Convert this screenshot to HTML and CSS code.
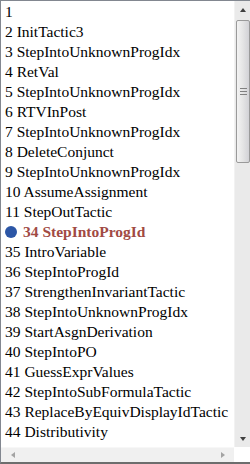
FILE: index.html
```html
<!DOCTYPE html>
<html lang="en">
	<head>
		<meta charset="UTF-8" />
		<meta name="viewport" content="width=device-width, initial-scale=1.0" />
		<link rel="stylesheet" href="styles.css">
		<title>Tactics</title>
	</head>
	<body>
		<div class="listbox">
			<ul class="items">
				<li>1</li>
				<li>2 InitTactic3</li>
				<li>3 StepIntoUnknownProgIdx</li>
				<li>4 RetVal</li>
				<li>5 StepIntoUnknownProgIdx</li>
				<li>6 RTVInPost</li>
				<li>7 StepIntoUnknownProgIdx</li>
				<li>8 DeleteConjunct</li>
				<li>9 StepIntoUnknownProgIdx</li>
				<li>10 AssumeAssignment</li>
				<li>11 StepOutTactic</li>
				<li class="current"><span class="dot"></span>34 StepIntoProgId</li>
				<li>35 IntroVariable</li>
				<li>36 StepIntoProgId</li>
				<li>37 StrengthenInvariantTactic</li>
				<li>38 StepIntoUnknownProgIdx</li>
				<li>39 StartAsgnDerivation</li>
				<li>40 StepIntoPO</li>
				<li>41 GuessExprValues</li>
				<li>42 StepIntoSubFormulaTactic</li>
				<li>43 ReplaceByEquivDisplayIdTactic</li>
				<li>44 Distributivity</li>
			</ul>
			<div class="vscroll">
				<div class="arrow up"></div>
				<div class="track">
					<div class="thumb"><span class="grip"></span></div>
				</div>
				<div class="arrow down"></div>
			</div>
			<div class="hscroll">
				<div class="arrow left"></div>
				<div class="arrow right"></div>
			</div>
			<div class="corner"></div>
		</div>
	</body>
</html>
```
FILE: styles.css
```css
* {
	margin: 0;
	padding: 0;
	box-sizing: border-box;
}
body {
	width: 250px;
	height: 464px;
	overflow: hidden;
	background: #fff;
}
.listbox {
	width: 250px;
	height: 464px;
	border: 1px solid #828790;
	border-right: none;
	border-bottom: 2px solid #6d6d6d;
	display: grid;
	grid-template-columns: 1fr 16px;
	grid-template-rows: 1fr 15px;
	background: #fff;
}
.items {
	list-style: none;
	overflow: hidden;
	padding-top: 1px;
	font-family: "Liberation Serif", "Times New Roman", serif;
	font-size: 15.5px;
	line-height: 20px;
	color: #000;
	white-space: nowrap;
}
.items li {
	padding-left: 4px;
	height: 20px;
	display: flex;
	align-items: center;
}
.current {
	font-weight: bold;
	color: #a14a44;
}
.dot {
	width: 12px;
	height: 12px;
	border-radius: 50%;
	background: #2c56a6;
	margin-right: 6px;
	flex: none;
}
.vscroll {
	grid-row: 1 / 2;
	grid-column: 2 / 3;
	background: #eaeaea;
	display: flex;
	flex-direction: column;
	border-left: 1px solid #f2f2f2;
}
.track {
	flex: 1;
	padding-top: 2px;
}
.thumb {
	height: 143px;
	margin: 0 0 0 1px;
	border: 1px solid #9a9a9a;
	border-radius: 2px;
	background: linear-gradient(to right, #f3f3f3, #e6e6e6 45%, #d2d2d6);
	display: flex;
	align-items: center;
	justify-content: center;
}
.grip {
	width: 7px;
	height: 7px;
	border-top: 1px solid #808080;
	border-bottom: 1px solid #808080;
	position: relative;
}
.grip::after {
	content: "";
	position: absolute;
	left: 0;
	right: 0;
	top: 2px;
	border-top: 1px solid #808080;
}
.arrow {
	width: 16px;
	height: 17px;
	display: flex;
	align-items: center;
	justify-content: center;
	flex: none;
}
.arrow::before {
	content: "";
	width: 0;
	height: 0;
}
.up::before {
	border-left: 3.5px solid transparent;
	border-right: 3.5px solid transparent;
	border-bottom: 4px solid #404040;
}
.down::before {
	border-left: 3.5px solid transparent;
	border-right: 3.5px solid transparent;
	border-top: 4px solid #404040;
}
.hscroll {
	grid-row: 2 / 3;
	grid-column: 1 / 2;
	background: #f0f0f0;
	border-top: 1px solid #f7f7f7;
	display: flex;
	justify-content: space-between;
	align-items: center;
	padding: 0 3px 0 4px;
}
.left::before {
	border-top: 3.5px solid transparent;
	border-bottom: 3.5px solid transparent;
	border-right: 4px solid #a3a3a3;
}
.right::before {
	border-top: 3.5px solid transparent;
	border-bottom: 3.5px solid transparent;
	border-left: 4px solid #a3a3a3;
}
.corner {
	grid-row: 2 / 3;
	grid-column: 2 / 3;
	background: #fff;
}
```
